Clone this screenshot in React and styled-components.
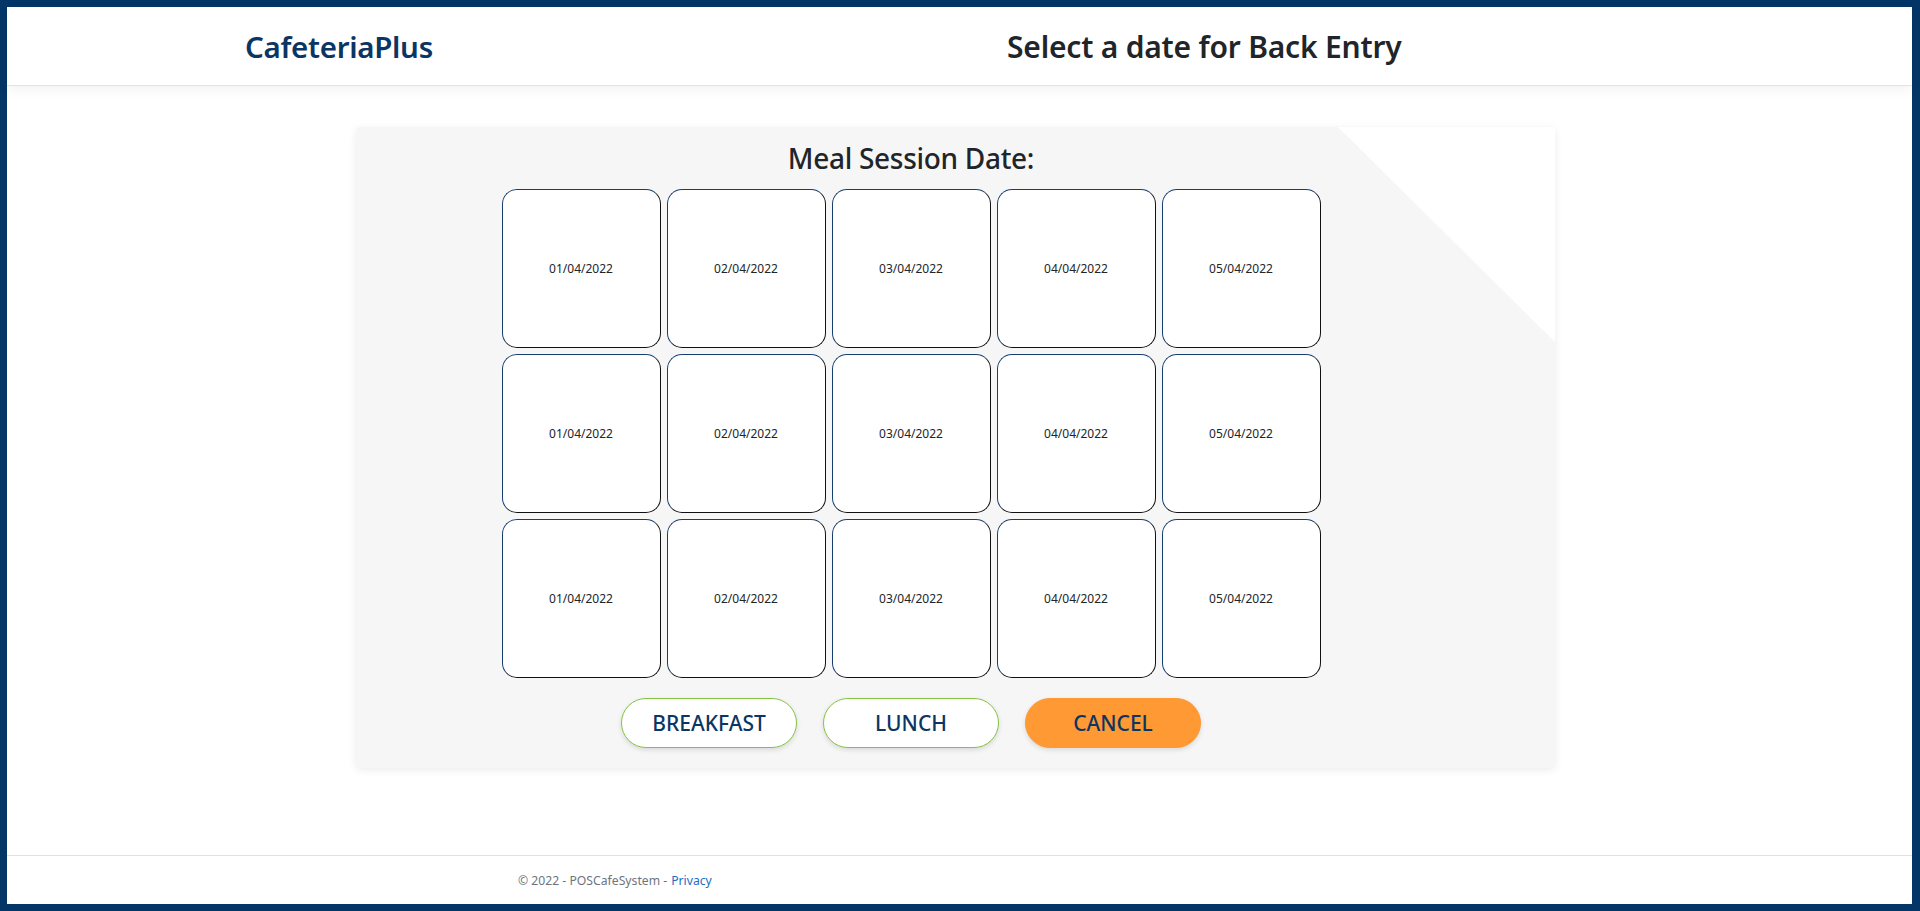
import React from "react";
import styled, { createGlobalStyle } from "styled-components";

const GlobalStyle = createGlobalStyle`
  html, body {
    margin: 0;
    padding: 0;
    height: 100%;
  }
  body {
    font-family: "Noto Sans", "Open Sans", sans-serif;
    color: #212529;
    background: #ffffff;
  }
  #root {
    height: 100%;
  }
`;

const Frame = styled.div`
  box-sizing: border-box;
  height: 911px;
  border-style: solid;
  border-color: #033566;
  border-width: 7px 8px 7px 7px;
  display: flex;
  flex-direction: column;
  background: #fff;
`;

const Header = styled.header`
  height: 78px;
  display: grid;
  grid-template-columns: 238px 762px 1fr;
  align-items: center;
  border-bottom: 1px solid #e2e2ea;
  box-shadow: 0 4px 12px rgba(0, 0, 0, 0.05);
  position: relative;
  z-index: 1;
`;

const Brand = styled.div`
  grid-column: 2;
  font-size: 29.5px;
  font-weight: 600;
  color: #0b3563;
  letter-spacing: -0.3px;
`;

const PageTitle = styled.h1`
  grid-column: 3;
  margin: 0;
  font-size: 30px;
  font-weight: 600;
  color: #212529;
  letter-spacing: -0.2px;
`;

const Main = styled.main`
  flex: 1;
  padding: 41px 0 0 349px;
`;

const Card = styled.section`
  position: relative;
  box-sizing: border-box;
  width: 1199px;
  padding: 13px 89px 20px 0;
  background: #f6f6f6;
  border-radius: 4px;
  box-shadow: 0 2px 8px rgba(0, 0, 0, 0.08);
  display: flex;
  flex-direction: column;
  align-items: center;

  &::after {
    content: "";
    position: absolute;
    top: 0;
    right: 0;
    width: 217px;
    height: 215px;
    background: #ffffff;
    clip-path: polygon(0 0, 100% 0, 100% 100%);
  }
`;

const CardTitle = styled.h2`
  margin: 0 0 13px;
  font-size: 28px;
  line-height: 36px;
  font-weight: 500;
  color: #212529;
  letter-spacing: -0.3px;
`;

const DateGrid = styled.div`
  display: grid;
  grid-template-columns: repeat(5, 159px);
  grid-auto-rows: 159px;
  gap: 6px;
`;

const DateTile = styled.button`
  box-sizing: border-box;
  background: #ffffff;
  border: 1px solid;
  border-color: #173f6e #111 #111 #173f6e;
  border-radius: 15px;
  font-family: "Noto Sans", sans-serif;
  font-size: 12px;
  color: #212529;
  display: flex;
  align-items: center;
  justify-content: center;
  cursor: pointer;
`;

const Actions = styled.div`
  display: flex;
  gap: 26px;
  margin-top: 20px;
`;

const PillButton = styled.button`
  box-sizing: border-box;
  width: 176px;
  height: 50px;
  border-radius: 25px;
  border: 1px solid ${(p) => (p.$variant === "cancel" ? "#ff9933" : "#84c441")};
  background: ${(p) => (p.$variant === "cancel" ? "#ff9933" : "#ffffff")};
  color: #0b3563;
  font-family: "Noto Sans", sans-serif;
  font-size: 21px;
  font-weight: 500;
  letter-spacing: 0;
  box-shadow: 0 2px 5px rgba(0, 0, 0, 0.12);
  cursor: pointer;
`;

const Footer = styled.footer`
  height: 48px;
  border-top: 1px solid #dee2e6;
  display: flex;
  align-items: center;
  padding-left: 511px;
  font-size: 12.2px;
  color: #6c757d;
`;

const FooterLink = styled.a`
  color: #1b6ec2;
  text-decoration: none;
  margin-left: 4px;
`;

const dates = ["01/04/2022", "02/04/2022", "03/04/2022", "04/04/2022", "05/04/2022"];

export default function App() {
  return (
    <>
      <GlobalStyle />
      <Frame>
        <Header>
          <span />
          <Brand>CafeteriaPlus</Brand>
          <PageTitle>Select a date for Back Entry</PageTitle>
        </Header>
        <Main>
          <Card>
            <CardTitle>Meal Session Date:</CardTitle>
            <DateGrid>
              {[0, 1, 2].map((row) =>
                dates.map((d) => <DateTile key={row + d}>{d}</DateTile>)
              )}
            </DateGrid>
            <Actions>
              <PillButton>BREAKFAST</PillButton>
              <PillButton>LUNCH</PillButton>
              <PillButton $variant="cancel">CANCEL</PillButton>
            </Actions>
          </Card>
        </Main>
        <Footer>
          © 2022 - POSCafeSystem -<FooterLink href="#">Privacy</FooterLink>
        </Footer>
      </Frame>
    </>
  );
}
